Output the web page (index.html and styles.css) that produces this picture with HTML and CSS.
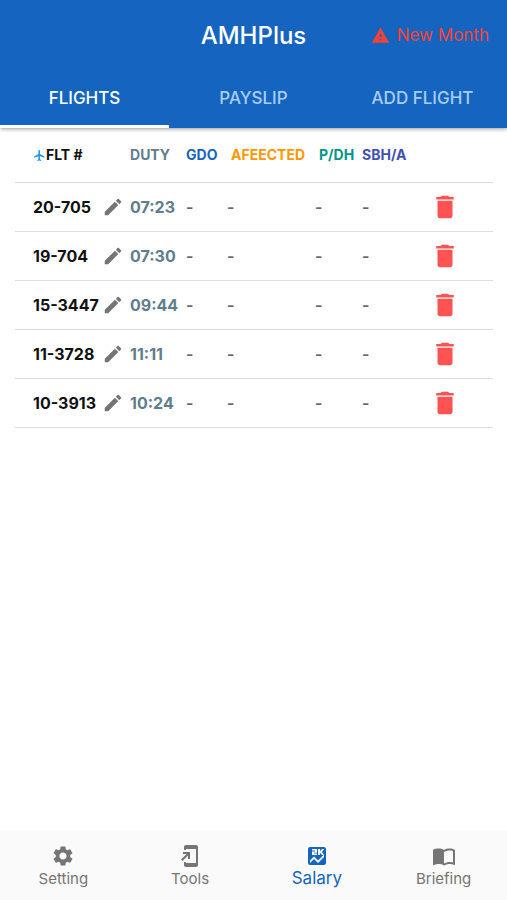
FILE: index.html
```html
<!DOCTYPE html>
<html lang="en">
<head>
<meta charset="utf-8">
<meta name="viewport" content="width=device-width, initial-scale=1">
<title>AMHPlus</title>
<link rel="stylesheet" href="styles.css">
</head>
<body>
<!-- shared icons -->
<svg class="sprite" aria-hidden="true">
	<symbol id="pencil" viewBox="0 0 24 24"><path d="M3 17.25V21h3.75L17.81 9.94l-3.75-3.75L3 17.25zM20.71 7.04c.39-.39.39-1.02 0-1.41l-2.34-2.34c-.39-.39-1.02-.39-1.41 0l-1.83 1.83 3.75 3.75 1.83-1.83z"/></symbol>
	<symbol id="trash" viewBox="0 0 24 24"><path d="M6 19c0 1.1.9 2 2 2h8c1.1 0 2-.9 2-2V7H6v12zM19 4h-3.5l-1-1h-5l-1 1H5v2h14V4z"/></symbol>
</svg>

<header class="appbar">
	<div class="toolbar">
		<h1 class="title">AMHPlus</h1>
		<button class="new-month" type="button">
			<svg viewBox="0 0 24 24"><path d="M1 21h22L12 2 1 21zm12-3h-2v-2h2v2zm0-4h-2v-4h2v4z"/></svg>
			New Month
		</button>
	</div>
	<nav class="tabs">
		<button class="tab active" type="button">FLIGHTS</button>
		<button class="tab" type="button">PAYSLIP</button>
		<button class="tab" type="button">ADD FLIGHT</button>
	</nav>
</header>

<main class="content">
	<table class="flights">
		<colgroup>
			<col class="col-flt"><col class="col-edit"><col class="col-duty"><col class="col-gdo">
			<col class="col-aff"><col class="col-pdh"><col class="col-sbh"><col>
		</colgroup>
		<thead>
			<tr>
				<th class="flt" colspan="2"><svg class="plane" viewBox="0 0 24 24"><path d="M21 16v-2l-8-5V3.500c0-.83-.67-1.500-1.500-1.500S10 2.670 10 3.500V9l-8 5v2l8-2.500V19l-2 1.500V22l3.500-1 3.500 1v-1.500L13 19v-5.500l8 2.500z"/></svg>FLT #</th>
				<th class="duty">DUTY</th>
				<th class="gdo">GDO</th>
				<th class="aff">AFEECTED</th>
				<th class="pdh">P/DH</th>
				<th class="sbh">SBH/A</th>
				<th></th>
			</tr>
		</thead>
		<tbody>
			<tr>
				<td class="flt">20-705</td>
				<td><button class="edit" type="button" aria-label="Edit 20-705"><svg><use href="#pencil"/></svg></button></td>
				<td class="duty">07:23</td>
				<td>-</td><td>-</td><td>-</td><td>-</td>
				<td class="remove"><button class="delete" type="button" aria-label="Delete 20-705"><svg><use href="#trash"/></svg></button></td>
			</tr>
			<tr>
				<td class="flt">19-704</td>
				<td><button class="edit" type="button" aria-label="Edit 19-704"><svg><use href="#pencil"/></svg></button></td>
				<td class="duty">07:30</td>
				<td>-</td><td>-</td><td>-</td><td>-</td>
				<td class="remove"><button class="delete" type="button" aria-label="Delete 19-704"><svg><use href="#trash"/></svg></button></td>
			</tr>
			<tr>
				<td class="flt">15-3447</td>
				<td><button class="edit" type="button" aria-label="Edit 15-3447"><svg><use href="#pencil"/></svg></button></td>
				<td class="duty">09:44</td>
				<td>-</td><td>-</td><td>-</td><td>-</td>
				<td class="remove"><button class="delete" type="button" aria-label="Delete 15-3447"><svg><use href="#trash"/></svg></button></td>
			</tr>
			<tr>
				<td class="flt">11-3728</td>
				<td><button class="edit" type="button" aria-label="Edit 11-3728"><svg><use href="#pencil"/></svg></button></td>
				<td class="duty">11:11</td>
				<td>-</td><td>-</td><td>-</td><td>-</td>
				<td class="remove"><button class="delete" type="button" aria-label="Delete 11-3728"><svg><use href="#trash"/></svg></button></td>
			</tr>
			<tr>
				<td class="flt">10-3913</td>
				<td><button class="edit" type="button" aria-label="Edit 10-3913"><svg><use href="#pencil"/></svg></button></td>
				<td class="duty">10:24</td>
				<td>-</td><td>-</td><td>-</td><td>-</td>
				<td class="remove"><button class="delete" type="button" aria-label="Delete 10-3913"><svg><use href="#trash"/></svg></button></td>
			</tr>
		</tbody>
	</table>
</main>

<nav class="bottom-nav">
	<a class="nav-item" href="#setting">
		<svg viewBox="0 0 24 24"><path d="M19.140 12.940c.04-.3.06-.61.06-.94 0-.32-.02-.64-.07-.94l2.030-1.580c.18-.14.23-.41.12-.61l-1.920-3.320c-.12-.22-.37-.29-.59-.22l-2.390.96c-.5-.38-1.030-.7-1.620-.94l-.36-2.540c-.04-.24-.24-.41-.48-.41h-3.840c-.24 0-.43.17-.47.41l-.36 2.540c-.59.24-1.130.57-1.620.94l-2.390-.96c-.22-.08-.47 0-.59.22L2.740 8.870c-.12.21-.08.47.12.61l2.030 1.580c-.05.3-.09.63-.09.94s.02.64.07.94l-2.030 1.580c-.18.14-.23.41-.12.61l1.920 3.320c.12.22.37.29.59.22l2.390-.96c.5.38 1.030.7 1.620.94l.36 2.540c.05.24.24.41.48.41h3.840c.24 0 .44-.17.47-.41l.36-2.540c.59-.24 1.130-.56 1.620-.94l2.390.96c.22.08.47 0 .59-.22l1.920-3.320c.12-.22.07-.47-.12-.61l-2.010-1.580zM12 15.600c-1.980 0-3.600-1.620-3.600-3.600s1.620-3.600 3.600-3.600 3.600 1.620 3.600 3.600-1.620 3.600-3.600 3.600z"/></svg>
		<span>Setting</span>
	</a>
	<a class="nav-item" href="#tools">
		<svg viewBox="0 0 24 24"><path d="M18 1.010L8 1c-1.100 0-2 .9-2 2v3h2V5h10v14H8v-1H6v3c0 1.100.9 2 2 2h10c1.100 0 2-.9 2-2V3c0-1.100-.9-1.990-2-1.990zM10 15h2V8H5v2h3.590L3 15.590 4.410 17 10 11.410V15z"/></svg>
		<span>Tools</span>
	</a>
	<a class="nav-item current" href="#salary">
		<svg viewBox="0 0 24 24"><path fill-rule="evenodd" d="M19 3H5c-1.100 0-2 .9-2 2v14c0 1.100.9 2 2 2h14c1.100 0 2-.9 2-2V5c0-1.100-.9-2-2-2zM13 5h2v2.200L17 5h2.200l-2.300 3 2.300 3H17l-2-2.200V11h-2zM7 5h5v3.800H9v.6h3V11H7V7.400h3v-.8H7zM19 13l-6 6-4-4-4 4v-2.500l4-4 4 4 6-6z"/></svg>
		<span>Salary</span>
	</a>
	<a class="nav-item" href="#briefing">
		<svg viewBox="0 0 24 24"><path d="M21 5c-1.110-.35-2.330-.5-3.500-.5-1.950 0-4.050.4-5.500 1.500-1.450-1.100-3.550-1.500-5.500-1.500S2.450 4.900 1 6v14.650c0 .25.25.5.5.5.1 0 .15-.05.25-.05C3.100 20.450 5.050 20 6.500 20c1.950 0 4.050.4 5.500 1.500 1.350-.85 3.800-1.500 5.500-1.500 1.650 0 3.350.3 4.750 1.050.1.05.15.05.25.05.25 0 .5-.25.5-.5V6c-.6-.45-1.250-.75-2-1zm0 13.500c-1.100-.35-2.300-.5-3.500-.5-1.700 0-4.150.65-5.500 1.500V8c1.350-.85 3.800-1.500 5.500-1.500 1.200 0 2.400.15 3.500.5v11.500z"/></svg>
		<span>Briefing</span>
	</a>
</nav>
</body>
</html>
```
FILE: styles.css
```css
* {
	box-sizing: border-box;
}
body {
	margin: 0;
	min-height: 100vh;
	display: flex;
	flex-direction: column;
	background: #fff;
	color: #111;
	font-family: Inter, Roboto, sans-serif;
}
button {
	padding: 0;
	border: 0;
	background: none;
	font: inherit;
	color: inherit;
	cursor: pointer;
}
svg {
	fill: currentColor;
}
.sprite {
	display: none;
}

/* top bar */
.appbar {
	background: #1565c0;
	color: #fff;
	box-shadow: 0 1px 4px rgba(0,0,0,0.4);
}
.toolbar {
	display: grid;
	grid-template-columns: 1fr auto 1fr;
	align-items: center;
	height: 70px;
	padding: 0 18px;
}
.title {
	grid-column: 2;
	margin: 0;
	font-size: 24px;
	font-weight: 500;
}
.new-month {
	display: flex;
	align-items: center;
	justify-self: end;
	gap: 7px;
	color: #f44336;
	font-size: 17px;
	white-space: nowrap;
}
.new-month svg {
	width: 19px;
	height: 19px;
}
.tabs {
	display: grid;
	grid-template-columns: repeat(3, 1fr);
}
.tab {
	height: 58px;
	border-bottom: 3px solid transparent;
	color: #a9cdf5;
	font-size: 17px;
	font-weight: 500;
}
.tab.active {
	color: #fff;
	border-bottom-color: #fff;
}

/* flights table */
.content {
	flex: 1;
	padding: 0 14px 0 15px;
}
.flights {
	width: 100%;
	table-layout: fixed;
	border-collapse: collapse;
	font-size: 16px;
}
.col-flt { width: 87px; }
.col-edit { width: 28px; }
.col-duty { width: 56px; }
.col-gdo { width: 41px; }
.col-aff { width: 88px; }
.col-pdh { width: 47px; }
.col-sbh { width: 50px; }
.flights th,
.flights td {
	padding: 0;
	border-bottom: 1px solid #dedede;
	text-align: left;
	white-space: nowrap;
}
.flights th {
	height: 54px;
	font-size: 14px;
	font-weight: 700;
}
.flights td {
	height: 49px;
	color: #666;
	font-weight: 600;
}
.flights .flt {
	padding-left: 18px;
	color: #111;
	font-weight: 700;
}
.flights .duty {
	color: #607d8b;
	font-weight: 700;
}
.gdo { color: #1565c0; }
.flights .aff { color: #ff9800; padding-left: 4px; }
.flights .pdh { color: #009688; padding-left: 4px; }
.sbh { color: #3f51b5; }
.plane {
	width: 13px;
	height: 13px;
	vertical-align: -2px;
	color: #2196f3;
}
.edit,
.delete {
	display: block;
}
.edit svg {
	display: block;
	width: 22px;
	height: 22px;
	color: #757575;
}
.flights .remove {
	padding-right: 15px;
}
.delete {
	margin: 0 auto;
}
.delete svg {
	display: block;
	width: 30px;
	height: 30px;
	color: #ff5252;
}

/* bottom bar */
.bottom-nav {
	display: grid;
	grid-template-columns: repeat(4, 1fr);
	height: 70px;
	background: #fafafa;
}
.nav-item {
	display: flex;
	flex-direction: column;
	align-items: center;
	padding-top: 14px;
	color: #757575;
	font-size: 15px;
	line-height: 22px;
	text-decoration: none;
}
.nav-item svg {
	width: 24px;
	height: 24px;
}
.nav-item.current {
	color: #1565c0;
	font-size: 17px;
	line-height: 20px;
}
```
